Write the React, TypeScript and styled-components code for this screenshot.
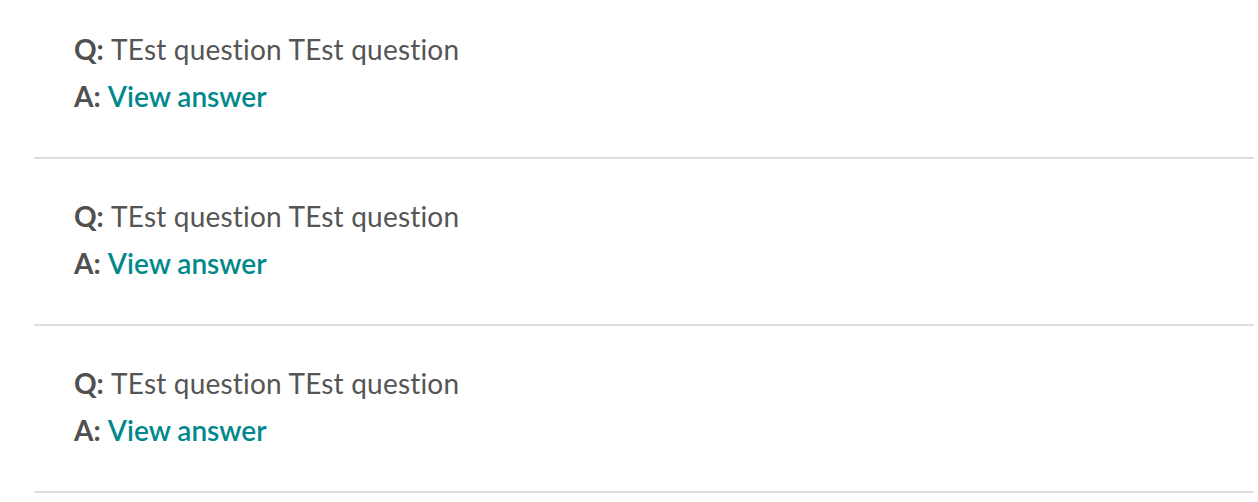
import React from 'react';
import styled, { createGlobalStyle } from 'styled-components';

const GlobalStyle = createGlobalStyle`
  body {
    margin: 0;
    background: #fff;
    font-family: Lato, "Noto Sans", sans-serif;
  }
`;

const List = styled.div`
  padding: 0 4px 0 34px;
`;

const Item = styled.div`
  padding: 34px 0 37px 40px;
  border-bottom: 2px solid #dddddd;

  &:first-child {
    padding-top: 26px;
  }
`;

const Line = styled.div`
  font-size: 28px;
  line-height: 47px;
  color: #555555;
  font-variant-ligatures: none;
`;

const Label = styled.strong`
  font-weight: 700;
  color: #505050;
`;

const Question = styled.span`
  letter-spacing: 0.2px;
`;

const AnswerLink = styled.a`
  color: #00888c;
  font-weight: 600;
  text-decoration: none;
  cursor: pointer;
`;

const faqs = [
  { id: 1, question: 'TEst question TEst question' },
  { id: 2, question: 'TEst question TEst question' },
  { id: 3, question: 'TEst question TEst question' },
];

export default function App() {
  return (
    <>
      <GlobalStyle />
      <List>
        {faqs.map((faq) => (
          <Item key={faq.id}>
            <Line>
              <Label>Q:</Label> <Question>{faq.question}</Question>
            </Line>
            <Line>
              <Label>A:</Label> <AnswerLink>View answer</AnswerLink>
            </Line>
          </Item>
        ))}
      </List>
    </>
  );
}
